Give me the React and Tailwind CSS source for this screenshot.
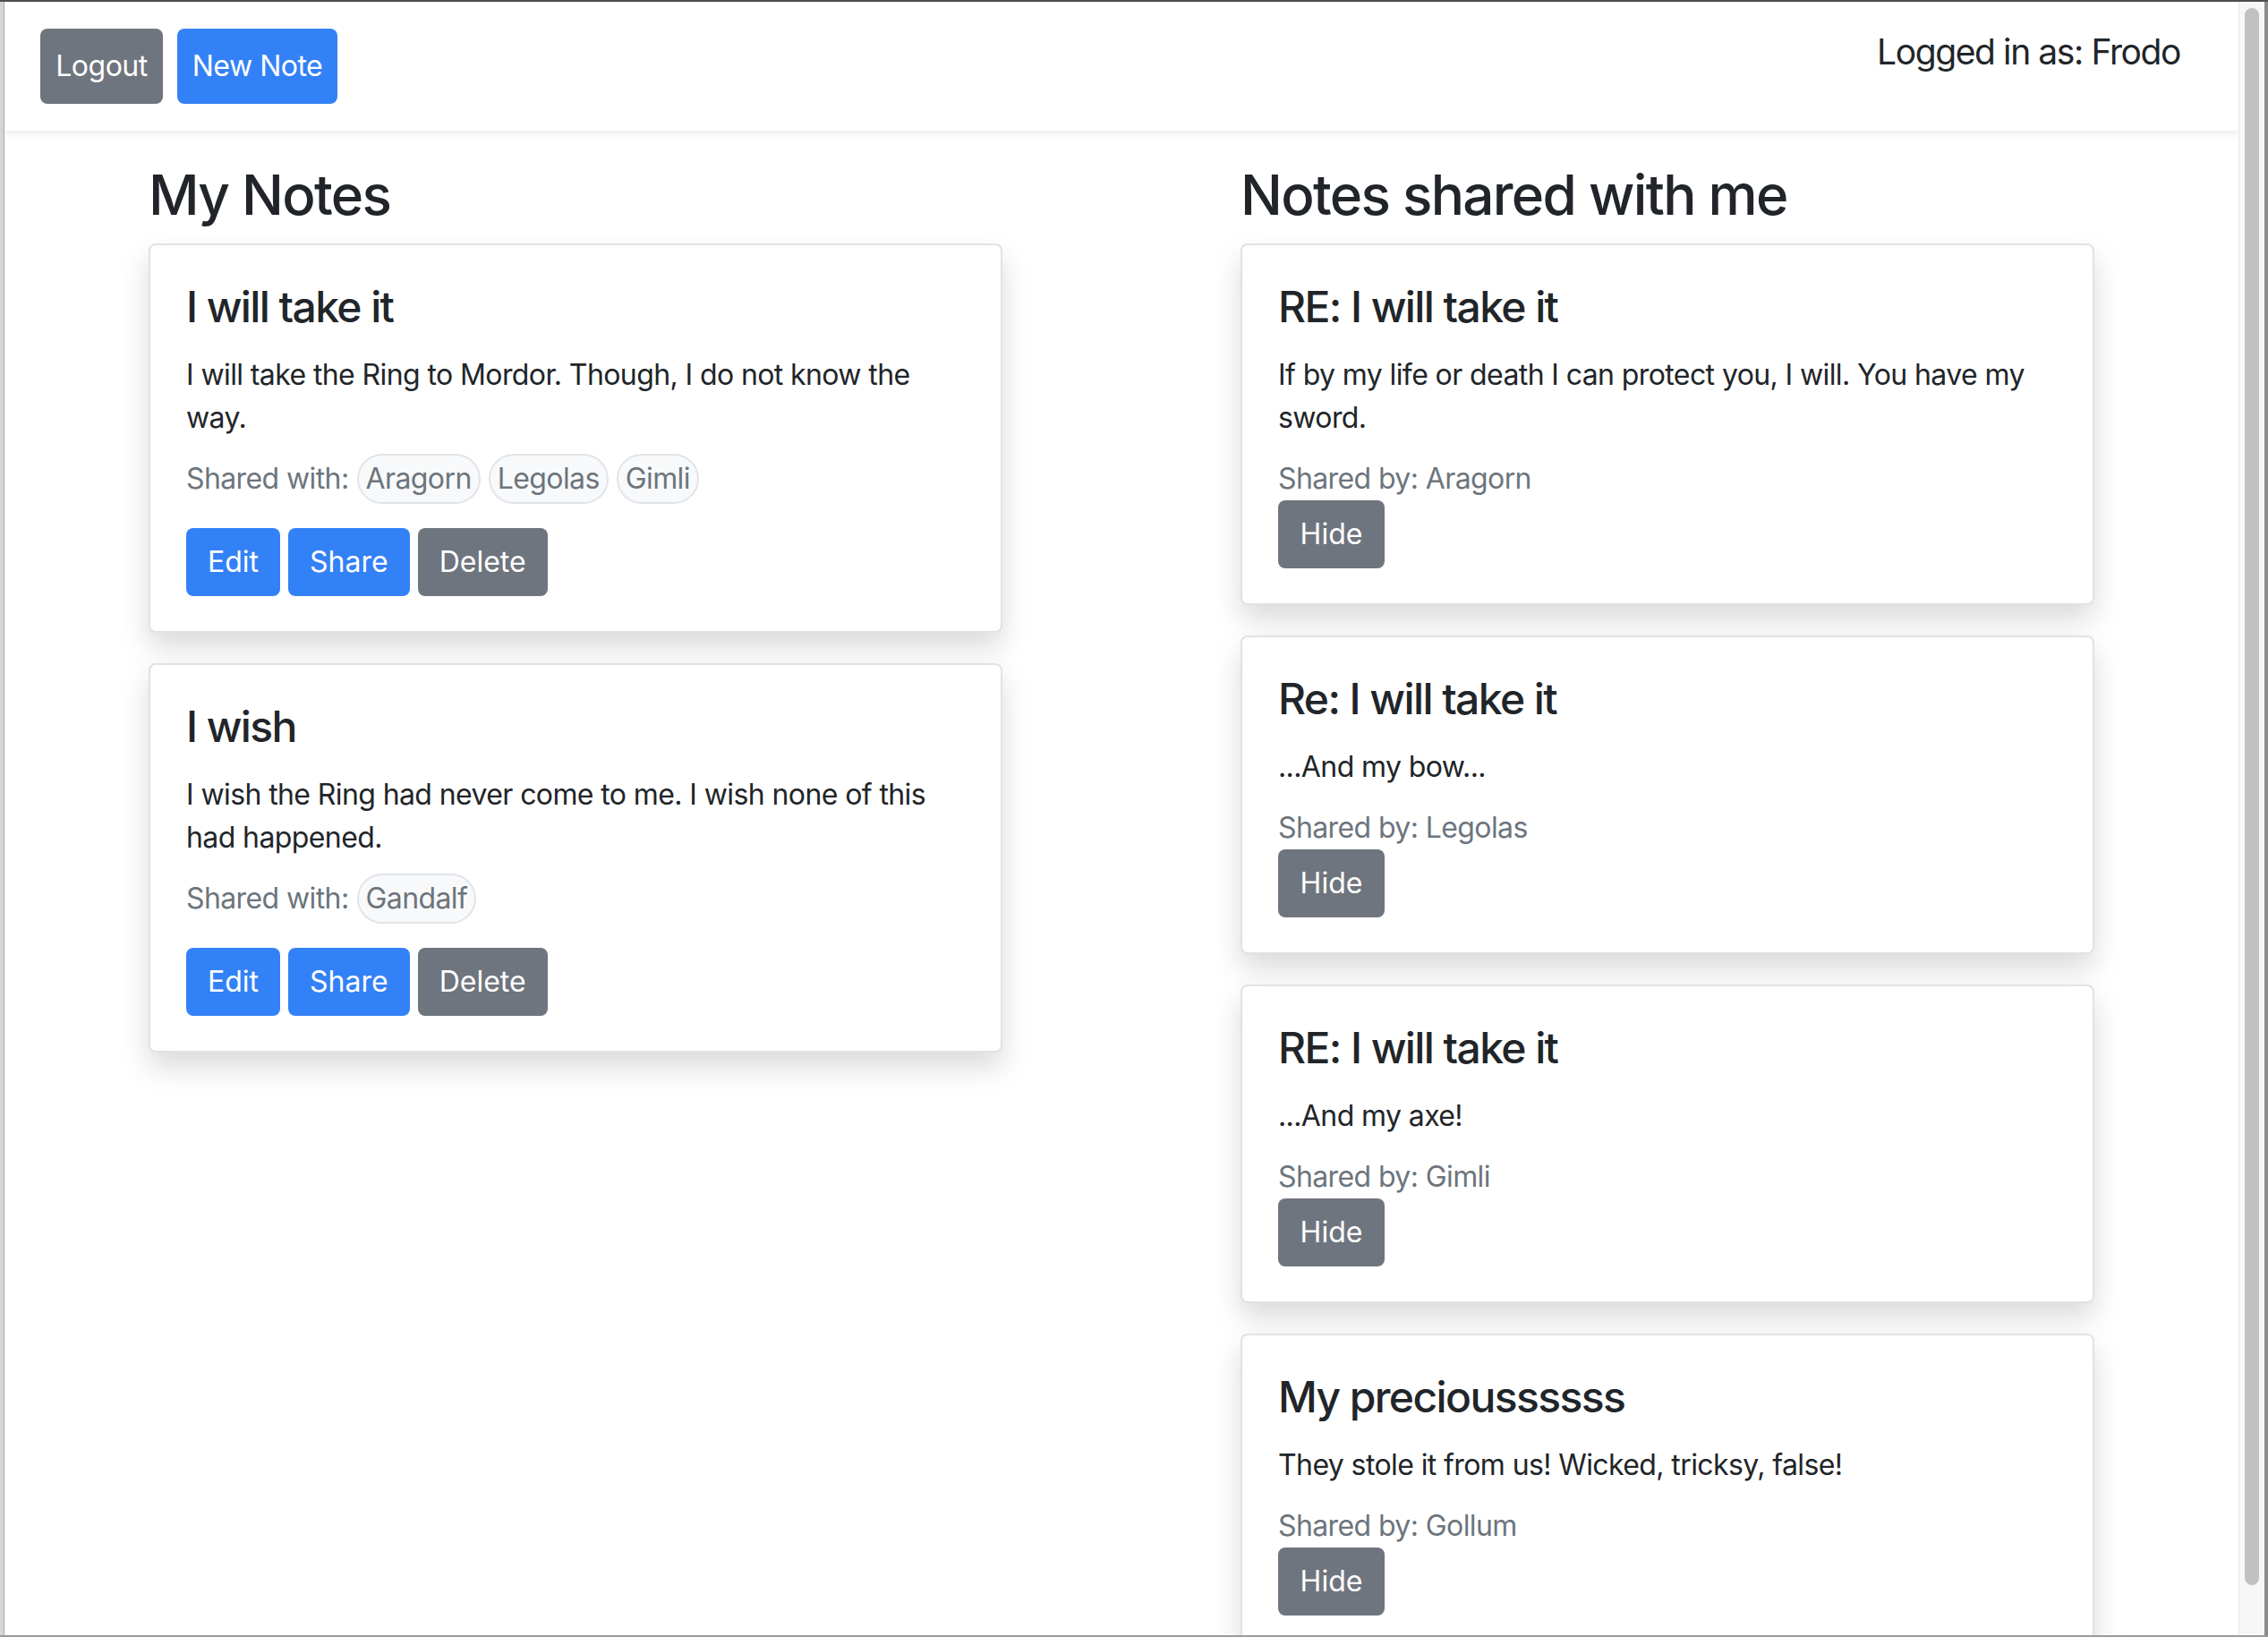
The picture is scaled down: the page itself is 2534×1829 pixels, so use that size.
import React from 'react';

const myNotes = [
    {
        title: 'I will take it',
        body: 'I will take the Ring to Mordor. Though, I do not know the way.',
        sharedWith: ['Aragorn', 'Legolas', 'Gimli'],
    },
    {
        title: 'I wish',
        body: 'I wish the Ring had never come to me. I wish none of this had happened.',
        sharedWith: ['Gandalf'],
    },
];

const sharedNotes = [
    {
        title: 'RE: I will take it',
        body: 'If by my life or death I can protect you, I will. You have my sword.',
        by: 'Aragorn',
    },
    { title: 'Re: I will take it', body: '...And my bow...', by: 'Legolas' },
    { title: 'RE: I will take it', body: '...And my axe!', by: 'Gimli' },
    { title: 'My precioussssss', body: 'They stole it from us! Wicked, tricksy, false!', by: 'Gollum' },
];

const btnBlue = 'h-[76px] rounded-[8px] bg-[#3381f6] px-[24px] text-[32px] leading-[48px] text-white';
const btnGrey = 'h-[76px] rounded-[8px] bg-[#6f757e] px-[24px] text-[32px] leading-[48px] text-white';

const Card = ({ title, children }) => (
    <div className="rounded-[8px] border-2 border-[#e2e2e2] bg-white px-[40px] pt-[43px] pb-[39px] shadow-[0_16px_32px_rgba(0,0,0,0.15)]">
        <h4 className="mb-[26px] text-[48px] font-medium leading-[52px] tracking-[-1.6px] text-[#212529]">{title}</h4>
        {children}
    </div>
);

const App = () => {
    return (
        <div className="flex h-[1829px] w-[2534px] flex-col overflow-hidden bg-white font-['Inter',sans-serif] text-[#212529]">
            <div className="h-[2px] bg-[#4d4d4d]" />
            <div className="flex min-h-0 flex-1">
                <div className="w-[5px] border-r border-[#a8a8a8] bg-[#d6d6d6]" />

                <div className="flex min-w-0 flex-1 flex-col overflow-hidden">
                    {/* navbar */}
                    <div className="relative z-10 flex h-[144px] shrink-0 items-start justify-between bg-white pl-[40px] pr-[65px] shadow-[0_4px_8px_rgba(0,0,0,0.075)]">
                        <div className="mt-[30px] flex gap-[16px]">
                            <button className="h-[84px] w-[137px] rounded-[8px] bg-[#6f757e] text-[32px] tracking-[-0.5px] text-white">Logout</button>
                            <button className="h-[84px] w-[179px] rounded-[8px] bg-[#3381f6] text-[32px] tracking-[-0.5px] text-white">New Note</button>
                        </div>
                        <div className="mt-[26px] text-[39px] leading-[60px] tracking-[-1.4px]">Logged in as: Frodo</div>
                    </div>

                    {/* content */}
                    <div className="mx-auto grid w-[2174px] grid-cols-[954px_954px] justify-between pt-[33px]">
                        <div>
                            <h2 className="mb-[16px] text-[62px] font-medium leading-[77px] tracking-[-1.7px]">My Notes</h2>
                            <div className="flex flex-col gap-[34px]">
                                {myNotes.map((note, i) => (
                                    <Card key={i} title={note.title}>
                                        <p className="mb-[20px] text-[32px] leading-[48px] tracking-[-0.6px]">{note.body}</p>
                                        <p className="mb-[31px] text-[32px] leading-[48px] tracking-[-0.6px] text-[#6c757d]">
                                            Shared with:
                                            {note.sharedWith.map((name) => (
                                                <span
                                                    key={name}
                                                    className="-my-[4px] ml-[9px] inline-block rounded-full border-2 border-[#e1e4e8] bg-[#f8f9fa] px-[8px] py-[2px] leading-[48px]"
                                                >
                                                    {name}
                                                </span>
                                            ))}
                                        </p>
                                        <div className="flex gap-[9px]">
                                            <button className={btnBlue}>Edit</button>
                                            <button className={btnBlue}>Share</button>
                                            <button className={btnGrey}>Delete</button>
                                        </div>
                                    </Card>
                                ))}
                            </div>
                        </div>

                        <div>
                            <h2 className="mb-[16px] text-[62px] font-medium leading-[77px] tracking-[-1.7px]">Notes shared with me</h2>
                            <div className="flex flex-col gap-[34px]">
                                {sharedNotes.map((note, i) => (
                                    <Card key={i} title={note.title}>
                                        <p className="mb-[20px] text-[32px] leading-[48px] tracking-[-0.6px]">{note.body}</p>
                                        <p className="text-[32px] leading-[48px] tracking-[-0.6px] text-[#6c757d]">Shared by: {note.by}</p>
                                        <button className="h-[76px] w-[119px] rounded-[8px] bg-[#6f757e] text-[32px] leading-[48px] text-white">Hide</button>
                                    </Card>
                                ))}
                            </div>
                        </div>
                    </div>
                </div>

                {/* scrollbar */}
                <div className="flex w-[29px] border-l border-[#e6e6e6] bg-[#f7f7f7] px-[6px] pt-[7px] pb-[56px]">
                    <div className="flex-1 rounded-full bg-[#c1c1c1]" />
                </div>
                <div className="w-[4px] bg-[#8c8c8c]" />
            </div>
            <div className="h-[2px] bg-[#9a9a9a]" />
        </div>
    );
};

export default App;
